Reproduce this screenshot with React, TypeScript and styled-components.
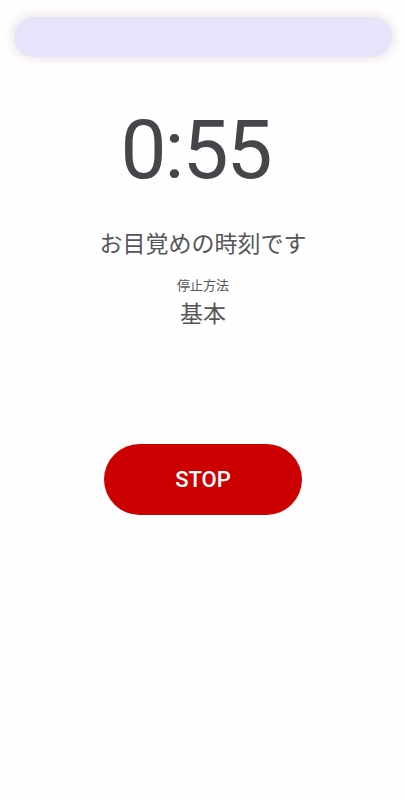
import styled, { createGlobalStyle } from "styled-components";

const GlobalStyle = createGlobalStyle`
  html, body {
    margin: 0;
    padding: 0;
    background: #fefefe;
  }
  body {
    font-family: Roboto, "Noto Sans CJK JP", sans-serif;
  }
`;

const Screen = styled.div`
  width: 405px;
  height: 800px;
  display: flex;
  flex-flow: column nowrap;
  align-items: center;
  box-sizing: border-box;
  padding: 17px 13px 0 14px;
`;

const TopBar = styled.div`
  width: 100%;
  height: 40px;
  border-radius: 20px;
  background: #e6e4fb;
  box-shadow: 0 0 6px 4px rgba(238, 224, 226, 0.6);
`;

const Timer = styled.div`
  margin-top: 52px;
  margin-right: 15px;
  font-size: 82px;
  line-height: 1;
  font-weight: 400;
  color: #45454a;
  letter-spacing: -2px;
`;

const Message = styled.div`
  margin-top: 39px;
  font-size: 23px;
  line-height: 1.3;
  color: #555558;
`;

const Label = styled.div`
  margin-top: 18px;
  font-size: 13px;
  line-height: 1.2;
  color: #555558;
`;

const Method = styled.div`
  margin-top: 7px;
  font-size: 23px;
  line-height: 1.3;
  color: #555558;
`;

const StopButton = styled.button`
  margin-top: 114px;
  width: 198px;
  height: 71px;
  border: none;
  border-radius: 36px;
  background: #cc0000;
  color: #fff;
  font-family: Roboto, sans-serif;
  font-size: 22px;
  font-weight: 500;
  cursor: pointer;
`;

export default function App() {
  return (
    <>
      <GlobalStyle />
      <Screen>
        <TopBar />
        <Timer>0:55</Timer>
        <Message>お目覚めの時刻です</Message>
        <Label>停止方法</Label>
        <Method>基本</Method>
        <StopButton>STOP</StopButton>
      </Screen>
    </>
  );
}
